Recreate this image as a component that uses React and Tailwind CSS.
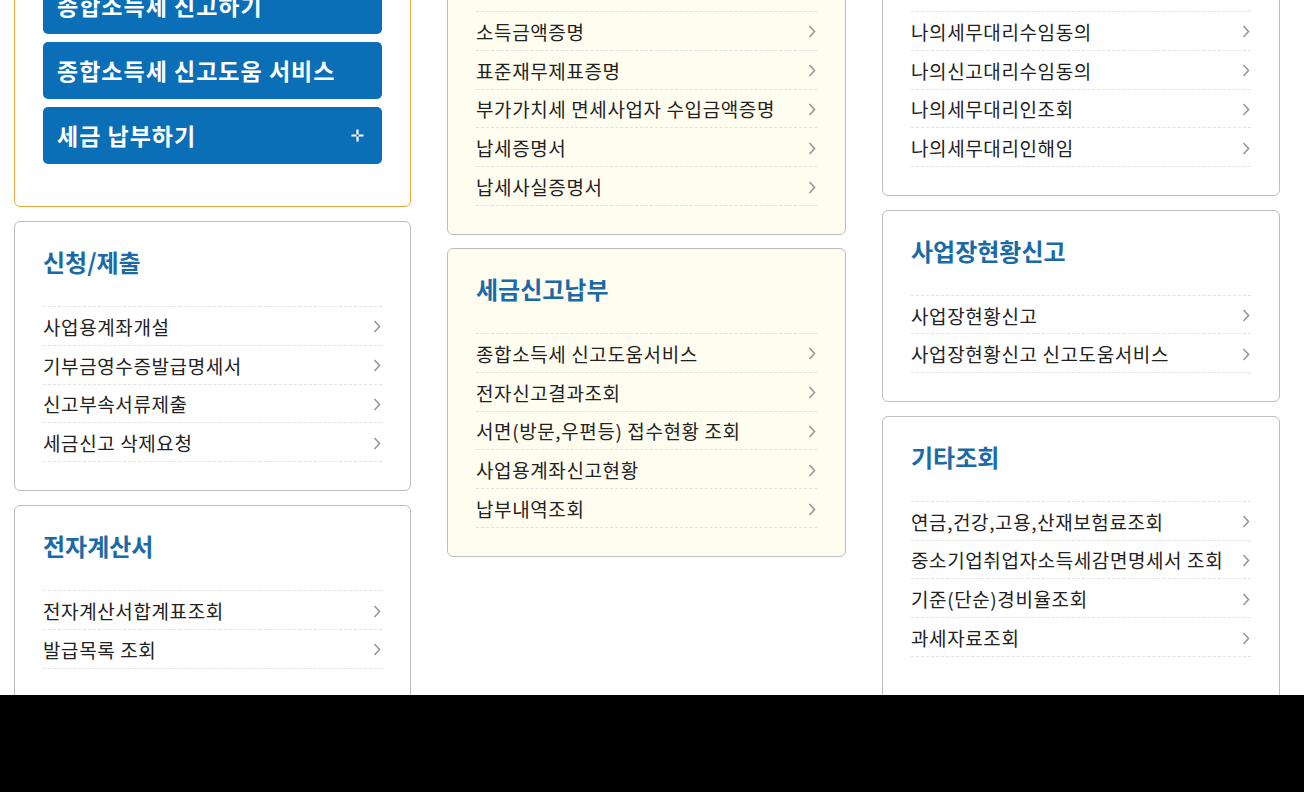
import React from "react";

const FONT = { fontFamily: '"Noto Sans CJK KR", "Noto Sans", sans-serif' };

function Chevron() {
  return (
    <svg width="8" height="13" viewBox="0 0 8 13" className="shrink-0 mr-[1px]">
      <polyline
        points="1.5,1 6.5,6.5 1.5,12"
        fill="none"
        stroke="#9a9a9a"
        strokeWidth="1.7"
      />
    </svg>
  );
}

function List({ items }) {
  return (
    <ul className="border-b border-dashed border-[#e2e2e2]">
      {items.map((t) => (
        <li
          key={t}
          className="h-[38.8px] pt-[2px] border-t border-dashed border-[#e2e2e2] flex items-center justify-between text-[19px] leading-[24px] tracking-[0.6px] text-[#222222]"
        >
          <span>{t}</span>
          <Chevron />
        </li>
      ))}
    </ul>
  );
}

function Card({ title, items, cream, tall }) {
  return (
    <div
      className={`rounded-[6px] border border-[#bdbdbd] px-[28px] pt-[26px] ${
        tall ? "pb-[60px]" : "pb-[28px]"
      } ${cream ? "bg-[#fefdf0]" : "bg-white"}`}
    >
      <h3 className="text-[24px] leading-[28px] font-bold text-[#1b6aa8] mb-[30px]">
        {title}
      </h3>
      <List items={items} />
    </div>
  );
}

function BlueButton({ children, plus }) {
  return (
    <div className="h-[57px] rounded-[5px] bg-[#0a6fb7] flex items-center justify-between pl-[14px] pr-[18px] text-white text-[23px] font-bold tracking-[1px]">
      <span>{children}</span>
      {plus && (
        <svg width="13" height="13" viewBox="0 0 13 13">
          <path d="M6.5 0.5v12M0.5 6.5h12" stroke="white" strokeWidth="2.2" />
          <rect x="5.5" y="5.5" width="2" height="2" fill="#0a4f86" />
        </svg>
      )}
    </div>
  );
}

export default function App() {
  return (
    <div className="w-[1304px] h-[792px] bg-black" style={FONT}>
      <div className="h-[695px] bg-white overflow-hidden">
        <div className="flex gap-[36px] pl-[14px] mt-[-74px]">
          {/* Column 1 */}
          <div className="w-[397px] flex flex-col gap-[14px]">
            <div className="rounded-[6px] border border-[#eeaa3c] bg-white px-[28px] pt-[50px] pb-[42px] flex flex-col gap-[8px]">
              <BlueButton>종합소득세 신고하기</BlueButton>
              <BlueButton>종합소득세 신고도움 서비스</BlueButton>
              <BlueButton plus>세금 납부하기</BlueButton>
            </div>
            <Card
              title="신청/제출"
              items={[
                "사업용계좌개설",
                "기부금영수증발급명세서",
                "신고부속서류제출",
                "세금신고 삭제요청",
              ]}
            />
            <Card
              tall
              title="전자계산서"
              items={["전자계산서합계표조회", "발급목록 조회"]}
            />
          </div>

          {/* Column 2 */}
          <div className="w-[399px] flex flex-col gap-[13px]">
            <Card
              cream
              title="민원증명"
              items={[
                "소득금액증명",
                "표준재무제표증명",
                "부가가치세 면세사업자 수입금액증명",
                "납세증명서",
                "납세사실증명서",
              ]}
            />
            <Card
              cream
              title="세금신고납부"
              items={[
                "종합소득세 신고도움서비스",
                "전자신고결과조회",
                "서면(방문,우편등) 접수현황 조회",
                "사업용계좌신고현황",
                "납부내역조회",
              ]}
            />
          </div>

          {/* Column 3 */}
          <div className="w-[398px] flex flex-col gap-[13.5px]">
            <Card
              title="세무대리인"
              items={[
                "나의세무대리수임동의",
                "나의신고대리수임동의",
                "나의세무대리인조회",
                "나의세무대리인해임",
              ]}
            />
            <Card
              title="사업장현황신고"
              items={["사업장현황신고", "사업장현황신고 신고도움서비스"]}
            />
            <Card
              tall
              title="기타조회"
              items={[
                "연금,건강,고용,산재보험료조회",
                "중소기업취업자소득세감면명세서 조회",
                "기준(단순)경비율조회",
                "과세자료조회",
              ]}
            />
          </div>
        </div>
      </div>
    </div>
  );
}
